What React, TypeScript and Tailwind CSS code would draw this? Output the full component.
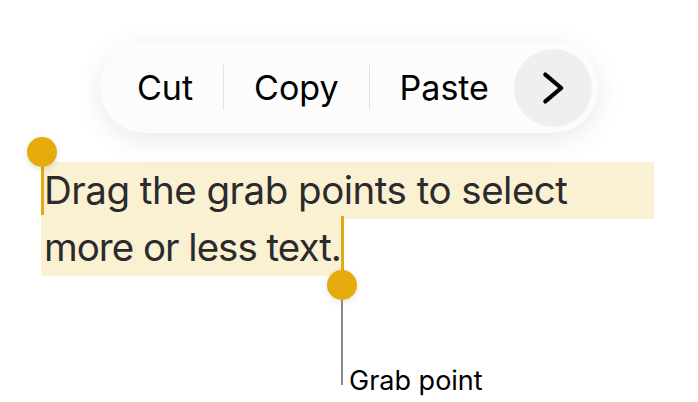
import React from "react";

const HANDLE = "bg-[#e5ab0c]";

export default function App() {
  return (
    <div
      className="relative h-[402px] w-[698px] overflow-hidden bg-white"
      style={{ fontFamily: "Inter, 'Noto Sans', sans-serif" }}
    >
      {/* Edit menu */}
      <div className="ml-[100px] mt-[42px] flex h-[91px] w-[498px] items-center rounded-full bg-[#fcfcfc] pl-[37px] pr-[6px] shadow-[0_6px_28px_rgba(0,0,0,0.09)]">
        <span className="text-[34px] leading-none text-black">Cut</span>
        <div className="mx-[30px] h-[45px] w-px bg-[#e2e2e2]" />
        <span className="text-[34px] leading-none text-black">Copy</span>
        <div className="mx-[30px] h-[45px] w-px bg-[#e2e2e2]" />
        <span className="text-[34px] leading-none text-black">Paste</span>
        <div className="ml-auto flex h-[78px] w-[78px] items-center justify-center rounded-full bg-[#efefef]">
          <svg viewBox="0 0 24 24" className="h-[46px] w-[46px]" fill="none">
            <path
              d="M8 5l8.3 7L8 19"
              stroke="#000"
              strokeWidth="2.2"
              strokeLinecap="round"
              strokeLinejoin="round"
            />
          </svg>
        </div>
      </div>

      {/* Selected text */}
      <div className="ml-[41px] mt-[29px] w-[613px] text-[38.5px] leading-[57px] tracking-[-0.5px] text-[#2b2b2d]">
        <div className="bg-[#faf0d2] pl-[3px]">Drag the grab points to select</div>
        <div className="inline-block bg-[#faf0d2] pl-[3px] pr-[1px] tracking-[-1px]">more or less text.</div>
      </div>

      {/* Start handle */}
      <div className={`absolute left-[41px] top-[151px] h-[64px] w-[3px] ${HANDLE}`} />
      <div className={`absolute left-[27px] top-[137px] h-[30px] w-[30px] rounded-full ${HANDLE} shadow-[0_2px_6px_rgba(0,0,0,0.12)]`} />

      {/* End handle */}
      <div className={`absolute left-[341px] top-[216px] h-[69px] w-[3px] ${HANDLE}`} />
      <div className={`absolute left-[327px] top-[270px] h-[30px] w-[30px] rounded-full ${HANDLE} shadow-[0_2px_6px_rgba(0,0,0,0.12)]`} />

      {/* Callout */}
      <div className="absolute left-[341px] top-[300px] h-[85px] w-[2px] bg-[#8a8a8a]" />
      <div className="absolute left-[349px] top-[364px] text-[27px] leading-[34px] text-black">
        Grab point
      </div>
    </div>
  );
}
